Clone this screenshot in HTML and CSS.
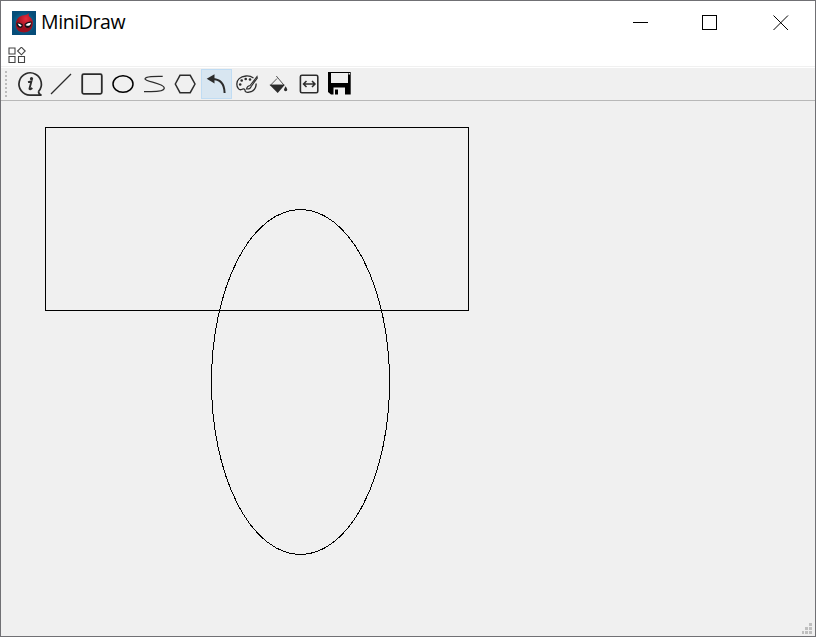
FILE: index.html
```
<!DOCTYPE html>
<html lang="en">
<head>
<meta charset="utf-8">
<title>MiniDraw</title>
<link rel="stylesheet" href="styles.css">
</head>
<body>
<div class="window">
  <header class="titlebar">
    <svg class="app-icon" viewBox="0 0 24 24">
      <defs><radialGradient id="bg"><stop offset="0.4" stop-color="#08719a"/><stop offset="1" stop-color="#064c78"/></radialGradient>
      <radialGradient id="red" cx="0.6" cy="0.3"><stop offset="0" stop-color="#e82c3c"/><stop offset="1" stop-color="#98101f"/></radialGradient></defs>
      <rect width="24" height="24" fill="url(#bg)"/>
      <path d="M17 2Q16 5 18 6Q22 9 20.500 15Q18.500 21.500 12 21.500Q5 21.500 3.700 15Q3 7 10 4.500Q15 4 17 2Z" fill="url(#red)"/>
      <path d="M4.500 12Q6 10.500 10.500 13Q11.500 16.500 8.500 17Q4.500 16.500 4.500 12ZM12.500 13Q15 10 19.500 10.500Q20 16 16 17Q12.500 17 12.500 13Z" fill="#101018"/>
      <path d="M5.500 12.500Q8 12.500 9.700 14.500Q8 17 5.500 12.500ZM13.500 14Q16 11.500 19 11.700Q18 16.500 13.500 14Z" fill="#fff"/>
    </svg>
    <h1 class="title">MiniDraw</h1>
    <div class="controls">
      <svg class="control minimize" viewBox="0 0 16 16" shape-rendering="crispEdges"><path d="M0 7.500h15"/></svg>
      <svg class="control maximize" viewBox="0 0 16 16"><rect x=".5" y=".5" width="14" height="14"/></svg>
      <svg class="control" viewBox="0 0 16 16"><path d="M.5.5l14.500 14.500M15 .5L.5 15"/></svg>
    </div>
  </header>
  <nav class="menubar">
    <svg class="menu-icon" viewBox="8 47 18 17"><path d="M9 48h6v6H9zM9 56.500h6v6H9zM18.500 56.500h6v6h-6zM21.400 47.200l3.800 3.800l-3.800 3.800l-3.800-3.800z"/></svg>
  </nav>
  <div class="toolbar">
    <div class="grip"></div>
    <svg class="tool" viewBox="15 69 31 30"><path d="M38.500 91.500A11.200 11.200 0 1 0 30 95.200H41.500Q38.500 94 38.500 91.500" stroke-width="1.700"/><path d="M28 82.200L31.400 81.400L29.500 88.500Q29.500 90.400 32.300 88" stroke-width="1.900"/><circle cx="31.500" cy="78.700" r="1.600" class="solid"/></svg>
    <svg class="tool" viewBox="46 69 31 30"><path d="M51 94L71 74" stroke-width="1.200"/></svg>
    <svg class="tool" viewBox="77 69 31 30"><rect x="82.200" y="74.200" width="19.600" height="19.600" rx="1.500" stroke-width="1.800"/></svg>
    <svg class="tool" viewBox="108 69 31 30"><ellipse cx="123" cy="84" rx="10" ry="8.200" stroke="#000" stroke-width="1.500"/></svg>
    <svg class="tool" viewBox="139 69 31 30"><path d="M162.700 76.400C155 76.200 145 76.500 145 79C145 81.500 164.300 83.500 164.300 88C164.300 92 153 91.600 144 91.600" stroke-width="1.300"/></svg>
    <svg class="tool" viewBox="170 69 31 30"><path d="M175.300 84L180 75.300H190.200L195 84L190.200 92.700H180Z" stroke-width="1.500"/></svg>
    <svg class="tool active" viewBox="201 69 31 30"><path d="M212 79.100C220 79.100 224.400 84 224.600 93" stroke-width="2"/><path d="M206.700 78.800L214.500 74.300V83.500Z" class="solid"/></svg>
    <svg class="tool" viewBox="232 69 31 30"><path d="M253.500 78Q250 75.600 246 76C240 76.500 236.800 80 236.800 84C236.800 88 239.500 90.500 241.500 89.500C244 88.300 245.200 89 245.200 91.300Q246 92.800 249 92.200Q256 91 256.200 83.500" stroke-width="1.300"/><path d="M257 76.500L250 85.500Q247 86 246.500 89Q250 89.500 251.200 86.500L257.300 78Z" stroke-width="1.100"/><g class="solid"><circle cx="240.200" cy="84.500" r="1.300"/><circle cx="241.700" cy="80.500" r="1.300"/><circle cx="245.700" cy="79" r="1.300"/><circle cx="250" cy="79.500" r="1.300"/></g></svg>
    <svg class="tool" viewBox="263 69 31 30"><path d="M276.300 76L284 85.200H270.500L277 78.500" stroke-width=".8"/><path d="M269.500 84.700H284.900L277.700 93ZM285.600 86.300Q289 91 285.600 91.300Q282.400 91 285.600 86.300Z" class="solid"/></svg>
    <svg class="tool" viewBox="294 69 31 30"><rect x="300.400" y="75.300" width="17.400" height="17.400" rx="1.500" stroke-width="1.600"/><path d="M303.700 84H314.700M306.500 81L303.500 84L306.500 87M312 81L315 84L312 87" stroke-width="1.500"/></svg>
    <svg class="tool" viewBox="325 69 31 30"><path fill="#000" stroke="none" fill-rule="evenodd" d="M328 72H350.700V94.500H331L328 92ZM331 73V83H348V73ZM333.500 87.500V94.500H345V87.500ZM348.500 73V74.500H350V73Z"/><path fill="#000" stroke="none" d="M335 89.500H338V94.500H335Z"/></svg>
  </div>
  <main class="canvas">
    <svg class="drawing" viewBox="1 101 814 535" shape-rendering="crispEdges"><rect x="45.500" y="127.500" width="423" height="183"/><ellipse cx="300.500" cy="382" rx="89" ry="172.500"/></svg>
    <svg class="resize" viewBox="0 0 12 12"><path d="M7 0h3v3H7zM3 4h3v3H3zM7 4h3v3H7zM0 8h2v3H0zM3 8h3v3H3zM7 8h3v3H7z"/></svg>
  </main>
</div>
</body>
</html>
```
FILE: styles.css
```
* { box-sizing: border-box; }
body { margin: 0; }
.window {
  width: 816px;
  height: 637px;
  display: flex;
  flex-direction: column;
  border: 1px solid #707074;
  background: #fff;
  overflow: hidden;
}
svg { display: block; fill: none; stroke: #000; flex: none; }
.titlebar { display: flex; height: 43px; align-items: center; padding: 0 26px 0 11px; }
.app-icon { width: 24px; height: 24px; stroke: none; }
.title { margin: 0 0 2px 5px; font: 400 19.5px/26px "Open Sans", "Noto Sans", sans-serif; color: #000; letter-spacing: -.4px; }
.controls { display: flex; margin-left: auto; }
.control { width: 16px; height: 16px; }
.minimize { margin-right: 53px; }
.maximize { margin-right: 55px; }
.menubar { height: 22px; padding: 3px 0 0 7px; }
.menu-icon { width: 18px; height: 17px; stroke: #444; stroke-width: 1.1; }
.toolbar {
  display: flex;
  height: 35px;
  padding-top: 2px;
  border-top: 1px solid #f0f0f0;
  border-bottom: 1px solid #b8b8b8;
  background: linear-gradient(#fff 1px, #f0f0f0 1px);
}
.grip {
  width: 2px;
  height: 27px;
  margin: 2px 8px 0 4px;
  background: repeating-linear-gradient(#bbb 0 2px, transparent 2px 4px);
}
.tool { width: 31px; height: 30px; stroke: #2c2c2c; }
.solid { fill: #2c2c2c; stroke: none; }
.active { background: #d8e6f1; outline: 1px solid #c0dcf3; outline-offset: -1px; }
.canvas { position: relative; flex: 1; background: #f0f0f0; }
.drawing { width: 814px; height: 535px; }
.resize { position: absolute; right: 1px; bottom: 1px; width: 12px; height: 12px; fill: #bfbfbf; stroke: none; }
```
